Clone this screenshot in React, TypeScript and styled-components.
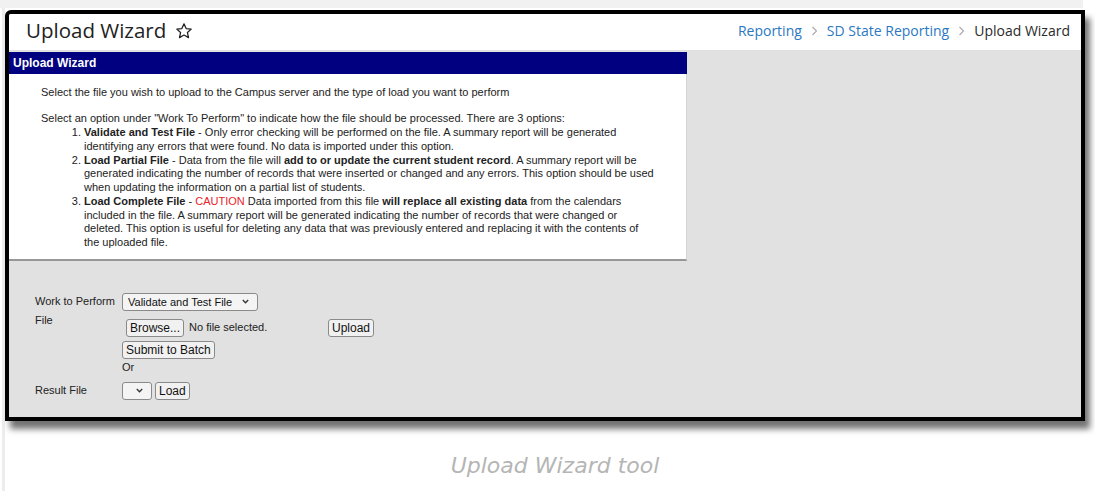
import * as React from 'react'
import styled, { createGlobalStyle } from 'styled-components'

const GlobalStyle = createGlobalStyle`
  html, body {
    margin: 0;
    padding: 0;
    background: #fff;
  }
  body {
    font-family: 'Liberation Sans', Arial, sans-serif;
    color: #222;
  }
`

const TopBand = styled.div`
  height: 8px;
  width: 1083px;
  background: #f1f1f1;
`

const Figure = styled.div`
  margin-left: 2px;
  border-left: 3px solid #ededed;
  padding-top: 2px;
  height: 483px;
  box-sizing: border-box;
`

const Frame = styled.div`
  width: 1080px;
  height: 411px;
  box-sizing: border-box;
  border: 4px solid #000;
  border-top-left-radius: 6px;
  box-shadow: 5px 8px 6px rgba(0, 0, 0, 0.55);
  background: #e1e1e1;
  display: flex;
  flex-direction: column;
  overflow: hidden;
`

const Header = styled.header`
  height: 36px;
  box-sizing: border-box;
  flex: none;
  background: #fff;
  display: flex;
  align-items: center;
  justify-content: space-between;
  padding: 0 11px 2px 17px;
`

const Title = styled.h1`
  margin: 0 0 1px;
  display: flex;
  align-items: center;
  gap: 9px;
  font: 400 20.5px/1 'Open Sans', sans-serif;
  color: #222;
`

const Crumbs = styled.nav`
  display: flex;
  align-items: center;
  gap: 9px;
  font: 400 14px/1 'Open Sans', sans-serif;
`

const Crumb = styled.span<{ $current?: boolean }>`
  color: ${p => (p.$current ? '#2b2b2b' : '#2b78c2')};
`

const Workspace = styled.main`
  flex: 1;
  padding-top: 2px;
  display: flex;
  flex-direction: column;
`

const Panel = styled.section`
  width: 678px;
`

const PanelTitle = styled.div`
  height: 22px;
  background: #000080;
  color: #fff;
  font: bold 12px/22px 'Liberation Sans', Arial, sans-serif;
  padding-left: 4px;
`

const PanelBody = styled.div`
  background: #fff;
  border-right: 1px solid #d4d4d4;
  border-bottom: 2px solid #979797;
  padding: 12px 31px 9px 32px;
  font-size: 11px;
  line-height: 13.75px;
  color: #222;
`

const Intro = styled.p<{ $spaced?: boolean }>`
  margin: 0 0 ${p => (p.$spaced ? 12.5 : 0)}px;
`

const Options = styled.ol`
  margin: 0;
  padding-left: 43px;
`

const Caution = styled.span`
  color: #e8232b;
`

const FormArea = styled.div`
  flex: 1;
  padding: 32px 0 0 26px;
  font-size: 11px;
  line-height: 13px;
  color: #222;
`

const FieldRow = styled.div<{ $top?: boolean; $gap?: number }>`
  display: flex;
  align-items: ${p => (p.$top ? 'flex-start' : 'center')};
  margin-top: ${p => p.$gap ?? 0}px;
`

const FieldLabel = styled.div`
  width: 87px;
  flex: none;
`

const Controls = styled.div`
  padding-top: 5px;
  display: flex;
  flex-direction: column;
  align-items: flex-start;
`

const Line = styled.div<{ $gap?: number }>`
  display: flex;
  align-items: center;
  margin-top: ${p => p.$gap ?? 0}px;
`

const Button = styled.button`
  height: 18px;
  box-sizing: border-box;
  padding: 1px 3px;
  margin: 0;
  border: 1px solid #8a8a8a;
  border-radius: 3px;
  background: #f1f1f1;
  color: #111;
  font: 12px/14px 'Liberation Sans', Arial, sans-serif;
`

const SelectBox = styled.div<{ $width: number }>`
  width: ${p => p.$width}px;
  height: 18px;
  box-sizing: border-box;
  border: 1px solid #8a8a8a;
  border-radius: 3px;
  background: #f4f4f4;
  display: flex;
  align-items: center;
  justify-content: space-between;
  padding: 0 8px 0 5px;
  font: 11px/14px 'Liberation Sans', Arial, sans-serif;
  color: #111;
`

const FilePicker = styled.div`
  width: 200px;
  margin-left: 4px;
  display: flex;
  align-items: center;
  gap: 5px;
`

const Caption = styled.div`
  margin-top: 32px;
  padding-left: 10px;
  text-align: center;
  font: italic 22px/26px 'DejaVu Sans', sans-serif;
  color: #b5b5b5;
`

const StarOutline = () => (
  <svg width="18" height="18" viewBox="0 0 24 24" fill="none" stroke="#222" strokeWidth="1.7" strokeLinejoin="round">
    <polygon points="12,2.5 14.9,8.7 21.6,9.5 16.6,14.1 18,20.8 12,17.4 6,20.8 7.4,14.1 2.4,9.5 9.1,8.7" />
  </svg>
)

const CrumbArrow = () => (
  <svg width="7" height="10" viewBox="0 0 7 10" fill="none" stroke="#a8a8a8" strokeWidth="1.1">
    <polyline points="1.5,1 5.5,5 1.5,9" />
  </svg>
)

const Chevron = () => (
  <svg width="7" height="5" viewBox="0 0 7 5" fill="none" stroke="#333" strokeWidth="1.3">
    <polyline points="0.8,1 3.5,3.8 6.2,1" />
  </svg>
)

const App: React.FC = () => (
  <>
    <GlobalStyle />
    <TopBand />
    <Figure>
      <Frame>
        <Header>
          <Title>
            Upload Wizard
            <StarOutline />
          </Title>
          <Crumbs>
            <Crumb>Reporting</Crumb>
            <CrumbArrow />
            <Crumb>SD State Reporting</Crumb>
            <CrumbArrow />
            <Crumb $current>Upload Wizard</Crumb>
          </Crumbs>
        </Header>

        <Workspace>
          <Panel>
            <PanelTitle>Upload Wizard</PanelTitle>
            <PanelBody>
              <Intro $spaced>
                Select the file you wish to upload to the Campus server and the type of load you want to perform
              </Intro>
              <Intro>
                Select an option under "Work To Perform" to indicate how the file should be processed. There are 3 options:
              </Intro>
              <Options>
                <li>
                  <b>Validate and Test File</b> - Only error checking will be performed on the file. A summary report
                  will be generated identifying any errors that were found. No data is imported under this option.
                </li>
                <li>
                  <b>Load Partial File</b> - Data from the file will <b>add to or update the current student record</b>.
                  A summary report will be generated indicating the number of records that were inserted or changed and
                  any errors. This option should be used when updating the information on a partial list of students.
                </li>
                <li>
                  <b>Load Complete File</b> - <Caution>CAUTION</Caution> Data imported from this file{' '}
                  <b>will replace all existing data</b> from the calendars included in the file. A summary report will
                  be generated indicating the number of records that were changed or deleted. This option is useful for
                  deleting any data that was previously entered and replacing it with the contents of the uploaded file.
                </li>
              </Options>
            </PanelBody>
          </Panel>

          <FormArea>
            <FieldRow>
              <FieldLabel>Work to Perform</FieldLabel>
              <SelectBox $width={136}>
                Validate and Test File
                <Chevron />
              </SelectBox>
            </FieldRow>

            <FieldRow $top $gap={3}>
              <FieldLabel>File</FieldLabel>
              <Controls>
                <Line>
                  <FilePicker>
                    <Button>Browse...</Button>
                    <span>No file selected.</span>
                  </FilePicker>
                  <Button style={{ marginLeft: 2 }}>Upload</Button>
                </Line>
                <Line $gap={4}>
                  <Button>Submit to Batch</Button>
                </Line>
                <Line $gap={2}>Or</Line>
              </Controls>
            </FieldRow>

            <FieldRow $gap={8}>
              <FieldLabel>Result File</FieldLabel>
              <Line>
                <SelectBox $width={30}>
                  <span />
                  <Chevron />
                </SelectBox>
                <Button style={{ marginLeft: 3 }}>Load</Button>
              </Line>
            </FieldRow>
          </FormArea>
        </Workspace>
      </Frame>
      <Caption>Upload Wizard tool</Caption>
    </Figure>
  </>
)

export default App
